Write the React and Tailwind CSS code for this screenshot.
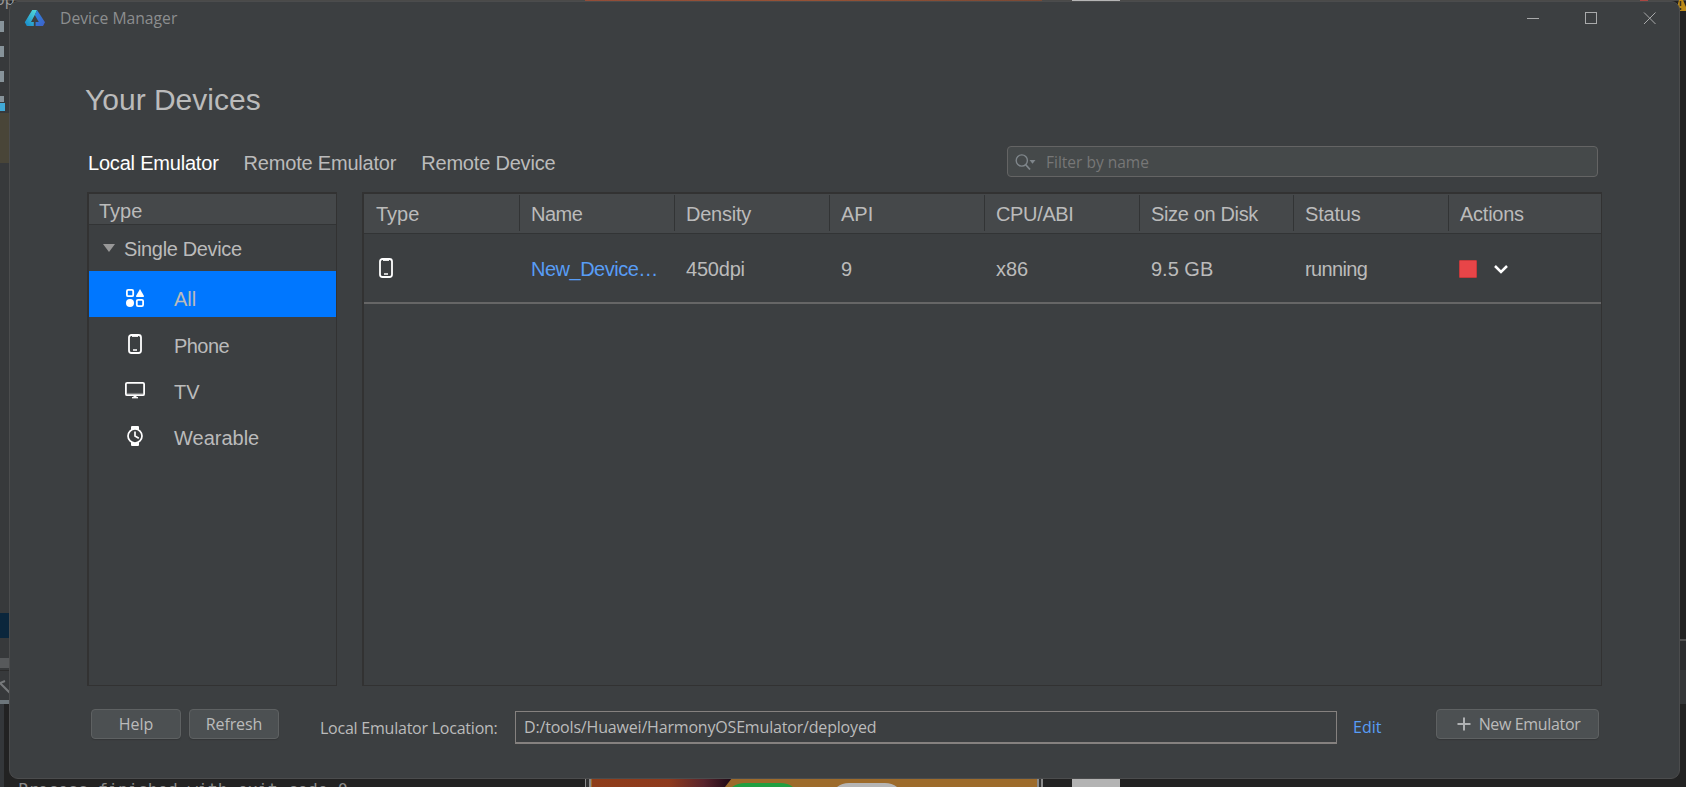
const columns = [
  { title: 'Type', cls: 'w-[156px] pl-[12px]' },
  { title: 'Name', cls: 'w-[155px] pl-[11px] tracking-[-0.5px]' },
  { title: 'Density', cls: 'w-[155px] pl-[11px] tracking-[-0.25px]' },
  { title: 'API', cls: 'w-[155px] pl-[11px]' },
  { title: 'CPU/ABI', cls: 'w-[155px] pl-[11px] tracking-[-0.35px]' },
  { title: 'Size on Disk', cls: 'w-[154px] pl-[11px] tracking-[-0.35px]' },
  { title: 'Status', cls: 'w-[155px] pl-[11px] tracking-[-0.2px]' },
  { title: 'Actions', cls: 'w-[152px] pl-[11px] tracking-[-0.25px]' },
];

function PhoneIcon() {
  return (
    <svg width="20" height="20" viewBox="0 0 20 20" fill="none" stroke="#fff">
      <rect x="4" y="1" width="12" height="18" rx="2.5" strokeWidth="1.8" />
      <path d="M7 1.8h6" strokeWidth="2.2" />
      <path d="M8 16h4" strokeWidth="1.5" />
    </svg>
  );
}

function AllIcon() {
  return (
    <svg width="20" height="20" viewBox="0 0 20 20" fill="none" stroke="#fff" strokeWidth="1.8">
      <rect x="1.9" y="1.9" width="6.3" height="6.3" rx="1.3" />
      <rect x="11.8" y="11.8" width="6.3" height="6.3" rx="1.3" />
      <circle cx="5" cy="15" r="4" fill="#fff" stroke="none" />
      <path d="M15 1 L19 8 Q19.2 9 18.2 9 H11.8 Q10.8 9 11 8Z" fill="#fff" stroke="none" />
    </svg>
  );
}

function TvIcon() {
  return (
    <svg width="20" height="20" viewBox="0 0 20 20" fill="none" stroke="#fff">
      <rect x="0.9" y="2.8" width="18.2" height="12.4" rx="1.3" strokeWidth="1.8" />
      <path d="M2 13.4h16" strokeWidth="1" strokeOpacity="0.35" />
      <path d="M10 15v2" strokeWidth="3" />
      <path d="M7 17.7h6" strokeWidth="1.3" />
    </svg>
  );
}

function WatchIcon() {
  return (
    <svg width="20" height="20" viewBox="0 0 20 20" fill="none" stroke="#fff">
      <path d="M6 4V1.2Q6 0 7 0h6q1 0 1 1.2V4ZM6 16v2.8Q6 20 7 20h6q1 0 1-1.2V16Z" fill="#fff" stroke="none" />
      <circle cx="10" cy="10" r="7" fill="#3c3f41" strokeWidth="1.7" />
      <path d="M10 5.5V10l3.8 2.2" strokeWidth="1.7" />
    </svg>
  );
}

const types = [
  { label: 'All', icon: <AllIcon />, row: 'bg-[#0077ff]', iconPos: 'pt-[17px]', textPos: 'pt-4' },
  { label: 'Phone', icon: <PhoneIcon />, row: '', iconPos: 'pt-[17px]', textPos: 'pt-[17px] tracking-[-0.55px]' },
  { label: 'TV', icon: <TvIcon />, row: '', iconPos: 'pt-[17px]', textPos: 'pt-[17px]' },
  { label: 'Wearable', icon: <WatchIcon />, row: '', iconPos: 'pt-[17px]', textPos: 'pt-[17px]' },
];

function Backdrop() {
  return (
    <div className="absolute inset-0 overflow-hidden bg-[#222]">
      <div className="absolute left-0 top-0 h-[700px] w-[10px] bg-[#37393b]" />
      <div className="absolute left-0 top-[703px] h-[84px] w-1 bg-[#34373a]" />
      <div className="absolute left-0 top-[21px] h-[11px] w-1 bg-[#87939a]" />
      <div className="absolute left-0 top-[46px] h-[11px] w-1 bg-[#87939a]" />
      <div className="absolute left-0 top-[71px] h-[11px] w-1 bg-[#87939a]" />
      <div className="absolute left-0 top-[96px] h-[6px] w-1 bg-[#87939a]" />
      <div className="absolute left-0 top-[103px] h-2 w-[5px] bg-[#40a9d6]" />
      <div className="absolute left-0 top-[113px] h-[50px] w-[10px] bg-[#494538]" />
      <div className="absolute left-0 top-[613px] h-[25px] w-[10px] bg-[#0b263c]" />
      <div className="absolute left-0 top-[658px] h-[10px] w-[10px] bg-[#57595b]" />
      <div className="absolute left-0 top-[670px] h-px w-[10px] bg-[#2b2b2b]" />
      <svg className="absolute left-0 top-[680px]" width="10" height="16" viewBox="0 0 10 16" fill="none" stroke="#77797b" strokeWidth="2">
        <path d="M0 3 L5 1 M0 3 L10 13" />
      </svg>
      <div className="absolute left-0 top-[700px] h-1 w-[10px] bg-[#6c757a]" />
      <div className="absolute left-0 top-0 h-px w-full bg-[#4a4a49]" />
      <div className="absolute -left-[5px] -top-[11px] font-['Open_Sans',sans-serif] text-[16px] leading-5 text-[#9a9a9a]">op</div>
      <div className="absolute left-[585px] top-0 h-px w-[457px] bg-linear-to-r from-[#924d38] via-[#965235] to-[#7a4934]" />
      <div className="absolute left-[1072px] top-0 h-px w-[48px] bg-[#b5b5b5]" />
      <div className="absolute left-[1640px] top-0 h-px w-[8px] bg-[#aa4742]" />
      <svg className="absolute left-[1676px] top-0" width="10" height="12" viewBox="0 0 10 12">
        <path d="M3 0L0 11H10V7L7 0Z" fill="#bb8a19" />
        <path d="M4.5 1v5M4.5 8v2" stroke="#3b3320" strokeWidth="1.5" />
      </svg>
      <div className="absolute left-[1679px] top-[639px] h-[2px] w-[7px] bg-[#505050]" />
      <div className="absolute left-[1679px] top-[641px] h-[29px] w-[7px] bg-[#2b2c2e]" />
      <div className="absolute left-[1679px] top-[670px] h-[34px] w-[7px] bg-[#343638]" />
      <div className="absolute left-[18px] top-[778px] whitespace-nowrap font-['DejaVu_Sans_Mono',monospace] text-[16.6px] leading-[24px] text-[#8b8b8b]">
        Process finished with exit code 0
      </div>
      <svg className="absolute left-[585px] top-[778px]" width="540" height="9" viewBox="0 0 540 9">
        <defs>
          <linearGradient id="wall" x1="0" x2="1" y1="0" y2="0">
            <stop offset="0" stopColor="#8e3d1a" />
            <stop offset="0.55" stopColor="#8e3a1d" />
            <stop offset="0.8" stopColor="#58242c" />
            <stop offset="1" stopColor="#1d0815" />
          </linearGradient>
        </defs>
        <rect width="458" height="9" fill="#8a8a8a" />
        <rect x="1" width="3" height="9" fill="#333" />
        <rect x="6" width="446" height="9" fill="#9d6b2b" />
        <path d="M7 0H147L140 9H7Z" fill="url(#wall)" />
        <rect x="454" width="2" height="9" fill="#333" />
        <path d="M147 9Q153 5 160 5H195Q203 5 208 9Z" fill="#209f41" />
        <path d="M252 9Q257 5 264 5H300Q307 5 312 9Z" fill="#b5b5b5" />
        <rect x="487" width="48" height="9" fill="#b3b3b3" />
      </svg>
    </div>
  );
}

function TitleBar() {
  return (
    <div className="flex h-[35px] shrink-0 items-start pl-[14px]">
      <svg className="mt-[7px]" width="22" height="18" viewBox="0 0 22 18">
        <defs>
          <linearGradient id="lg1" x1="0.8" y1="0" x2="0" y2="1">
            <stop offset="0" stopColor="#4fd6da" />
            <stop offset="1" stopColor="#1586c9" />
          </linearGradient>
          <linearGradient id="lg2" x1="0" y1="0" x2="1" y2="1">
            <stop offset="0" stopColor="#2b8be0" />
            <stop offset="1" stopColor="#3f5fc8" />
          </linearGradient>
        </defs>
        <path d="M8.2 1H13L10.8 6L7 13H9.8V17H2.8L0.8 13.3Z" fill="url(#lg1)" />
        <path d="M13 1L21 13.3L19 17H11.6V13H14.8L10.8 6Z" fill="url(#lg2)" />
      </svg>
      <span className="ml-[14px] mt-[4px] font-['Open_Sans',sans-serif] text-[15.7px] leading-6 text-[#8c8e8f]">Device Manager</span>
      <svg className="ml-auto mr-[19px] mt-[7px]" width="136" height="18" viewBox="0 0 136 18" fill="none" stroke="#a9aaab">
        <path d="M3 9.5h12" />
        <rect x="61.5" y="3.5" width="11" height="11" />
        <path d="M120 3.5l11.5 11.5M131.5 3.5L120 15" />
      </svg>
    </div>
  );
}

function TypePanel() {
  return (
    <aside className="flex h-[494px] w-[250px] shrink-0 flex-col border border-l-2 border-t-2 border-[#323232]">
      <div className="h-[31px] shrink-0 border-b border-[#323435] bg-[#45484a] pl-[10px] pt-[5px] leading-6">Type</div>
      <div className="flex h-[46px] shrink-0 items-start pl-[14px] pt-[12px]">
        <svg className="mt-[7px]" width="12" height="8" viewBox="0 0 12 8">
          <path d="M0 0H12L6 8Z" fill="#989898" />
        </svg>
        <span className="ml-[9px] leading-6 tracking-[-0.35px]">Single Device</span>
      </div>
      {types.map((t) => (
        <div key={t.label} className={`flex h-[46px] shrink-0 items-start pl-9 ${t.row}`}>
          <span className={t.iconPos}>{t.icon}</span>
          <span className={`ml-[29px] leading-6 ${t.textPos}`}>{t.label}</span>
        </div>
      ))}
    </aside>
  );
}

function DeviceTable() {
  const cell = 'shrink-0 overflow-hidden pl-[11px] pt-[2px]';
  return (
    <section className="flex h-[494px] w-[1240px] shrink-0 flex-col border border-l-2 border-t-2 border-[#323232]">
      <div className="flex h-[40px] shrink-0 border-b border-[#323435] bg-[#45484a] pt-px">
        {columns.map((c, i) => (
          <div
            key={c.title}
            className={`h-[36px] shrink-0 whitespace-nowrap pt-[7px] leading-6 ${c.cls} ${i < 7 ? 'border-r border-[#323435]' : ''}`}
          >
            {c.title}
          </div>
        ))}
      </div>
      <div className="flex h-[70px] shrink-0 items-center border-b-2 border-[#666] leading-6">
        <div className="w-[156px] shrink-0 pl-[12px]"><PhoneIcon /></div>
        <div className={`${cell} w-[155px] tracking-[-0.5px] text-[#589df6]`}>New_Device…</div>
        <div className={`${cell} w-[155px] tracking-[-0.2px]`}>450dpi</div>
        <div className={`${cell} w-[155px]`}>9</div>
        <div className={`${cell} w-[155px]`}>x86</div>
        <div className={`${cell} w-[154px]`}>9.5 GB</div>
        <div className={`${cell} w-[155px] tracking-[-0.65px]`}>running</div>
        <div className="flex items-center pl-[10px] pt-[2px]">
          <span className="size-[18px] rounded-[1px] border border-[#c5393b] bg-[#e84548]" />
          <svg className="ml-[17px]" width="14" height="9" viewBox="0 0 14 9" fill="none" stroke="#fff" strokeWidth="2.5">
            <path d="M1 1l6 6 6-6" />
          </svg>
        </div>
      </div>
    </section>
  );
}

const button =
  'flex h-[30px] items-center justify-center rounded-[4px] border border-[#5e6162] bg-[#4c5052] shadow-[0_1px_1px_#343638]';

function Footer() {
  return (
    <footer className="mt-[23px] flex items-start pl-[81px] font-['Open_Sans',sans-serif] text-[16px] leading-6">
      <button className={`${button} w-[90px]`}>Help</button>
      <button className={`${button} ml-[8px] w-[90px] tracking-[-0.1px]`}>Refresh</button>
      <span className="ml-[41px] mt-[7px] w-[195px] whitespace-nowrap tracking-[-0.23px]">Local Emulator Location:</span>
      <div className="mt-[2px] h-[33px] w-[822px] border border-b-2 border-[#85817f] pl-[8px] pt-[3px] tracking-[-0.18px]">
        D:/tools/Huawei/HarmonyOSEmulator/deployed
      </div>
      <span className="ml-[16px] mt-[6px] w-[83px]  text-[#589df6]">Edit</span>
      <button className={`${button} w-[163px] pl-[2px]`}>
        <svg width="14" height="14" viewBox="0 0 14 14" stroke="#afb1b3" strokeWidth="2">
          <path d="M7 0.5v13M0.5 7h13" />
        </svg>
        <span className="ml-[8px] tracking-[-0.35px]">New Emulator</span>
      </button>
    </footer>
  );
}

export default function App() {
  return (
    <div className="relative h-[787px] w-[1686px] overflow-hidden font-['Liberation_Sans',Arial,sans-serif] text-[20px] text-[#bbbbbb]">
      <Backdrop />
      <div className="relative ml-[9px] mt-0 flex pt-px">
        <main className="flex h-[778px] w-[1671px] flex-col overflow-hidden rounded-[9px] border border-[#4b4c4d] bg-[#3c3f41]">
          <TitleBar />
          <h1 className="ml-[75px] mt-[45px] text-[30px] leading-[36px]">Your Devices</h1>
          <div className="ml-[78px] mt-[28px] flex h-[31px] items-center">
            <span className="mt-[3px] tracking-[-0.2px] text-white">Local Emulator</span>
            <span className="ml-[25px] mt-[3px] tracking-[-0.2px]">Remote Emulator</span>
            <span className="ml-[25px] mt-[3px] tracking-[-0.2px]">Remote Device</span>
            <div className="ml-auto mr-[81px] flex h-[31px] w-[591px] items-center rounded-[4px] border border-[#646464] bg-[#45494a] pl-[7px]">
              <svg width="22" height="18" viewBox="0 0 22 18" fill="none" stroke="#7f868b" strokeWidth="1.4">
                <circle cx="6.8" cy="7.5" r="5.6" />
                <path d="M10.5 11.5l4.5 5" strokeWidth="1.8" />
                <path d="M14.5 7h6l-3 3.8z" fill="#7f868b" stroke="none" />
              </svg>
              <span className="ml-[9px] mt-[3px] font-['Open_Sans',sans-serif] text-[15.5px] text-[#777777]">Filter by name</span>
            </div>
          </div>
          <div className="ml-[77px] mt-[15px] flex gap-[25px]">
            <TypePanel />
            <DeviceTable />
          </div>
          <Footer />
        </main>
      </div>
    </div>
  );
}
